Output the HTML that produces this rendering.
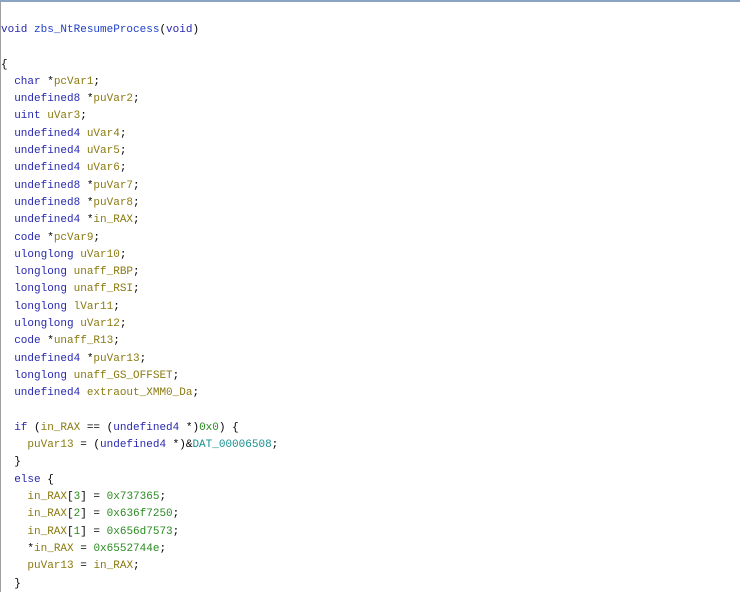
<!DOCTYPE html>
<html><head><style>
html,body{margin:0;padding:0;width:740px;height:592px;overflow:hidden;background:#fff}
.top{position:absolute;left:0;top:0;width:740px;height:2px;background:#8aa3bf}
.left{position:absolute;left:0;top:2px;width:1px;height:590px;background:#a0a0a0}
pre{position:absolute;left:1px;top:22px;margin:0;font-family:"Liberation Mono",monospace;font-size:11px;line-height:17.3px;color:#000}
.k{color:#2828b0}.f{color:#2040c8}.v{color:#8a7a10}.n{color:#2a8a20}.d{color:#189090}
</style></head><body>
<div class="top"></div><div class="left"></div>
<pre><span class="k">void</span> <span class="f">zbs_NtResumeProcess</span>(<span class="k">void</span>)

{
  <span class="k">char</span> *<span class="v">pcVar1</span>;
  <span class="k">undefined8</span> *<span class="v">puVar2</span>;
  <span class="k">uint</span> <span class="v">uVar3</span>;
  <span class="k">undefined4</span> <span class="v">uVar4</span>;
  <span class="k">undefined4</span> <span class="v">uVar5</span>;
  <span class="k">undefined4</span> <span class="v">uVar6</span>;
  <span class="k">undefined8</span> *<span class="v">puVar7</span>;
  <span class="k">undefined8</span> *<span class="v">puVar8</span>;
  <span class="k">undefined4</span> *<span class="v">in_RAX</span>;
  <span class="k">code</span> *<span class="v">pcVar9</span>;
  <span class="k">ulonglong</span> <span class="v">uVar10</span>;
  <span class="k">longlong</span> <span class="v">unaff_RBP</span>;
  <span class="k">longlong</span> <span class="v">unaff_RSI</span>;
  <span class="k">longlong</span> <span class="v">lVar11</span>;
  <span class="k">ulonglong</span> <span class="v">uVar12</span>;
  <span class="k">code</span> *<span class="v">unaff_R13</span>;
  <span class="k">undefined4</span> *<span class="v">puVar13</span>;
  <span class="k">longlong</span> <span class="v">unaff_GS_OFFSET</span>;
  <span class="k">undefined4</span> <span class="v">extraout_XMM0_Da</span>;

  <span class="k">if</span> (<span class="v">in_RAX</span> == (<span class="k">undefined4</span> *)<span class="n">0x0</span>) {
    <span class="v">puVar13</span> = (<span class="k">undefined4</span> *)&amp;<span class="d">DAT_00006508</span>;
  }
  <span class="k">else</span> {
    <span class="v">in_RAX</span>[<span class="n">3</span>] = <span class="n">0x737365</span>;
    <span class="v">in_RAX</span>[<span class="n">2</span>] = <span class="n">0x636f7250</span>;
    <span class="v">in_RAX</span>[<span class="n">1</span>] = <span class="n">0x656d7573</span>;
    *<span class="v">in_RAX</span> = <span class="n">0x6552744e</span>;
    <span class="v">puVar13</span> = <span class="v">in_RAX</span>;
  }
</pre>
</body></html>
